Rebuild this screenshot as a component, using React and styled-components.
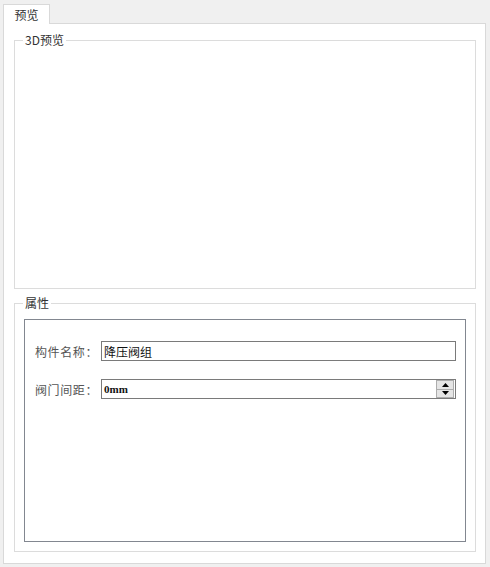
import React from "react"
import styled, { createGlobalStyle } from 'styled-components'

const Global = createGlobalStyle`
body{
  margin:0;
  background:#f0f0f0;
  font-family:"Noto Sans CJK SC","Liberation Sans",sans-serif;
  font-size:12px;
}
`

const Page = styled.div`
width:490px;
height:567px;
box-sizing:border-box;
padding:4px 4px 3px 3px;
display:flex;
flex-direction:column;
`

const TabBar = styled.div`
display:flex;
height:19px;
`

const Tab = styled.div`
width:47px;
box-sizing:border-box;
border:1px solid #d9d9d9;
border-bottom:none;
background:#fff;
color:#333;
display:flex;
align-items:center;
justify-content:center;
font-size:12px;
line-height:1;
margin-bottom:-1px;
position:relative;
z-index:1;
`

const Pane = styled.div`
flex:1;
border:1px solid #d9d9d9;
background:#fff;
padding:16px 9px 11px 10px;
display:flex;
flex-direction:column;
gap:14px;
`

const Group = styled.div`
position:relative;
border:1px solid #dcdcdc;
height:${p => p.h}px;
box-sizing:border-box;
padding:${p => p.pad || '0'};
display:flex;
`

const Legend = styled.span`
position:absolute;
top:-8px;
left:8px;
padding:0 2px;
background:#fff;
color:#333;
font-size:12px;
line-height:14px;
`

const Frame = styled.div`
flex:1;
border:1px solid #828790;
padding:21px 9px 0 10px;
display:flex;
flex-direction:column;
gap:18px;
`

const Row = styled.div`
display:flex;
align-items:center;
height:20px;
`

const Label = styled.span`
width:66px;
color:#555;
font-size:12px;
letter-spacing:0.6px;
`

const Field = styled.div`
flex:1;
height:20px;
box-sizing:border-box;
border:1px solid #7a7a7a;
display:flex;
align-items:center;
padding-left:2px;
color:#111;
font-size:${p => p.serif ? '11px' : '12px'};
font-weight:${p => p.serif ? 'bold' : 'normal'};
font-family:${p => p.serif ? '"Liberation Serif",serif' : '"Noto Sans CJK SC",sans-serif'};
`

const Spin = styled.div`
margin-left:auto;
margin-right:1px;
width:16px;
height:16px;
display:flex;
flex-direction:column;
border:1px solid #adadad;
background:#e5e5e5;
`

const SpinBtn = styled.div`
flex:1;
display:flex;
align-items:center;
justify-content:center;
& + &{border-top:1px solid #adadad;}
`

const Tri = ({ down }) => (
  <svg width="7" height="4" viewBox="0 0 7 4">
    <polygon points={down ? "0,0 7,0 3.5,4" : "3.5,0 7,4 0,4"} fill="#000" />
  </svg>
)

const App = () => {
  return (
    <>
      <Global />
      <Page>
        <TabBar>
          <Tab>预览</Tab>
        </TabBar>
        <Pane>
          <Group h={249}>
            <Legend>3D预览</Legend>
          </Group>
          <Group h={249} pad="15px 9px 9px 9px">
            <Legend>属性</Legend>
            <Frame>
              <Row>
                <Label>构件名称：</Label>
                <Field>降压阀组</Field>
              </Row>
              <Row>
                <Label>阀门间距：</Label>
                <Field serif>
                  0mm
                  <Spin>
                    <SpinBtn><Tri /></SpinBtn>
                    <SpinBtn><Tri down /></SpinBtn>
                  </Spin>
                </Field>
              </Row>
            </Frame>
          </Group>
        </Pane>
      </Page>
    </>
  )
}
export default App
